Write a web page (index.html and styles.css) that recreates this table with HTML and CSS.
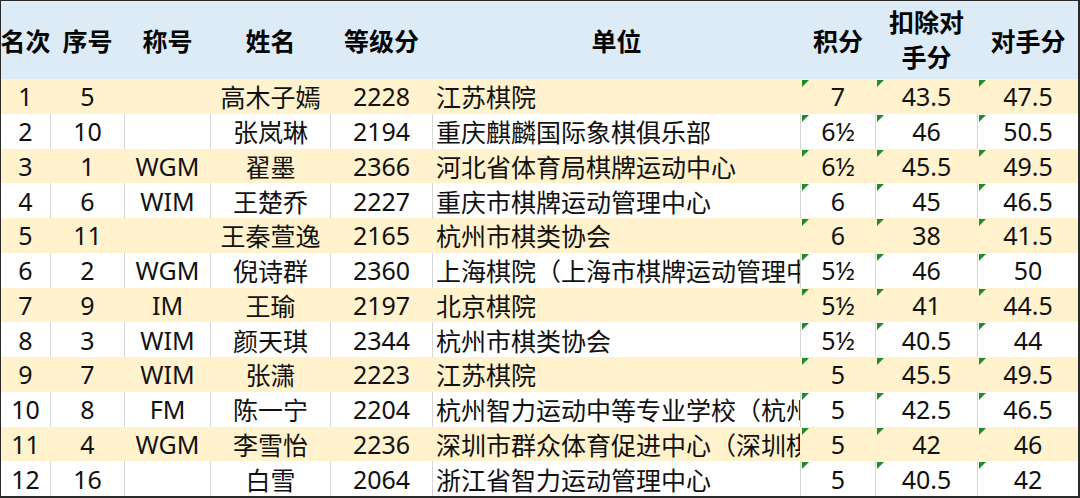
FILE: index.html
```html
<!DOCTYPE html>
<html lang="zh-CN">
<head>
<meta charset="utf-8">
<title>排名</title>
<link rel="stylesheet" href="styles.css">
</head>
<body>
<div class="sheet">
  <div class="row head">
    <div class="c">名次</div><div class="c">序号</div><div class="c">称号</div><div class="c">姓名</div><div class="c">等级分</div><div class="c">单位</div><div class="c">积分</div><div class="c two">扣除对<br>手分</div><div class="c">对手分</div>
  </div>
  <div class="row y"><div class="c">1</div><div class="c">5</div><div class="c"></div><div class="c">高木子嫣</div><div class="c">2228</div><div class="c org">江苏棋院</div><div class="c t">7</div><div class="c t">43.5</div><div class="c t">47.5</div></div>
  <div class="row w"><div class="c">2</div><div class="c">10</div><div class="c"></div><div class="c">张岚琳</div><div class="c">2194</div><div class="c org">重庆麒麟国际象棋俱乐部</div><div class="c t">6½</div><div class="c t">46</div><div class="c t">50.5</div></div>
  <div class="row y"><div class="c">3</div><div class="c">1</div><div class="c">WGM</div><div class="c">翟墨</div><div class="c">2366</div><div class="c org">河北省体育局棋牌运动中心</div><div class="c t">6½</div><div class="c t">45.5</div><div class="c t">49.5</div></div>
  <div class="row w"><div class="c">4</div><div class="c">6</div><div class="c">WIM</div><div class="c">王楚乔</div><div class="c">2227</div><div class="c org">重庆市棋牌运动管理中心</div><div class="c t">6</div><div class="c t">45</div><div class="c t">46.5</div></div>
  <div class="row y"><div class="c">5</div><div class="c">11</div><div class="c"></div><div class="c">王秦萱逸</div><div class="c">2165</div><div class="c org">杭州市棋类协会</div><div class="c t">6</div><div class="c t">38</div><div class="c t">41.5</div></div>
  <div class="row w"><div class="c">6</div><div class="c">2</div><div class="c">WGM</div><div class="c">倪诗群</div><div class="c">2360</div><div class="c org"><span class="clip">上海棋院（上海市棋牌运动管理中心）</span></div><div class="c t">5½</div><div class="c t">46</div><div class="c t">50</div></div>
  <div class="row y"><div class="c">7</div><div class="c">9</div><div class="c">IM</div><div class="c">王瑜</div><div class="c">2197</div><div class="c org">北京棋院</div><div class="c t">5½</div><div class="c t">41</div><div class="c t">44.5</div></div>
  <div class="row w"><div class="c">8</div><div class="c">3</div><div class="c">WIM</div><div class="c">颜天琪</div><div class="c">2344</div><div class="c org">杭州市棋类协会</div><div class="c t">5½</div><div class="c t">40.5</div><div class="c t">44</div></div>
  <div class="row y"><div class="c">9</div><div class="c">7</div><div class="c">WIM</div><div class="c">张潇</div><div class="c">2223</div><div class="c org">江苏棋院</div><div class="c t">5</div><div class="c t">45.5</div><div class="c t">49.5</div></div>
  <div class="row w"><div class="c">10</div><div class="c">8</div><div class="c">FM</div><div class="c">陈一宁</div><div class="c">2204</div><div class="c org"><span class="clip">杭州智力运动中等专业学校（杭州市棋类协会）</span></div><div class="c t">5</div><div class="c t">42.5</div><div class="c t">46.5</div></div>
  <div class="row y"><div class="c">11</div><div class="c">4</div><div class="c">WGM</div><div class="c">李雪怡</div><div class="c">2236</div><div class="c org"><span class="clip">深圳市群众体育促进中心（深圳棋院）</span></div><div class="c t">5</div><div class="c t">42</div><div class="c t">46</div></div>
  <div class="row w"><div class="c">12</div><div class="c">16</div><div class="c"></div><div class="c">白雪</div><div class="c">2064</div><div class="c org">浙江省智力运动管理中心</div><div class="c t">5</div><div class="c t">40.5</div><div class="c t">42</div></div>
</div>
</body>
</html>
```
FILE: styles.css
```css
* { box-sizing: border-box; }
html, body { margin: 0; padding: 0; background: #fff; }
body {
  font-family: "Noto Sans", "Noto Sans CJK SC", sans-serif;
  color: #111;
}
.sheet {
  width: 1080px;
  height: 498px;
  border-top: 1px solid #2a2a2a;
  border-left: 1px solid #2a2a2a;
  border-right: 2px solid #2a2a2a;
  border-bottom: 2px solid #2a2a2a;
  display: flex;
  flex-direction: column;
  overflow: hidden;
}
.row {
  display: grid;
  grid-template-columns: 49px 74px 86px 120px 102px 368px 75px 102px 1fr;
  flex: 1 1 0;
  min-height: 0;
}
.row.head {
  flex: 0 0 78px;
  background: #ddebf7;
  font-family: "Noto Sans CJK SC", sans-serif;
  font-weight: 700;
  font-size: 25px;
  color: #050505;
}
.row.y { background: #fff2cc; }
.row.w { background: #ffffff; }
.c {
  display: flex;
  align-items: center;
  justify-content: center;
  white-space: nowrap;
  overflow: hidden;
  position: relative;
  font-size: 25px;
  border-left: 1px solid transparent;
}
.c:first-child { border-left: none; }
.row.w .c { border-left-color: #d6d6d6; }
.row.w .c:first-child { border-left: none; }
.head .c { overflow: visible; }
.head .two { line-height: 35px; text-align: center; padding-bottom: 2px; }
.c.org {
  justify-content: flex-start;
  padding-left: 3px;
  font-family: "Noto Sans CJK SC", sans-serif;
}
.clip {
  display: block;
  width: 100%;
  overflow: hidden;
  white-space: nowrap;
}
.row:not(.head) .c:nth-child(4) { font-family: "Noto Sans CJK SC", sans-serif; }
.c.t::before {
  content: "";
  position: absolute;
  top: 1px;
  left: 1px;
  width: 0;
  height: 0;
  border-top: 7px solid #1f8c2a;
  border-right: 7px solid transparent;
}
```
